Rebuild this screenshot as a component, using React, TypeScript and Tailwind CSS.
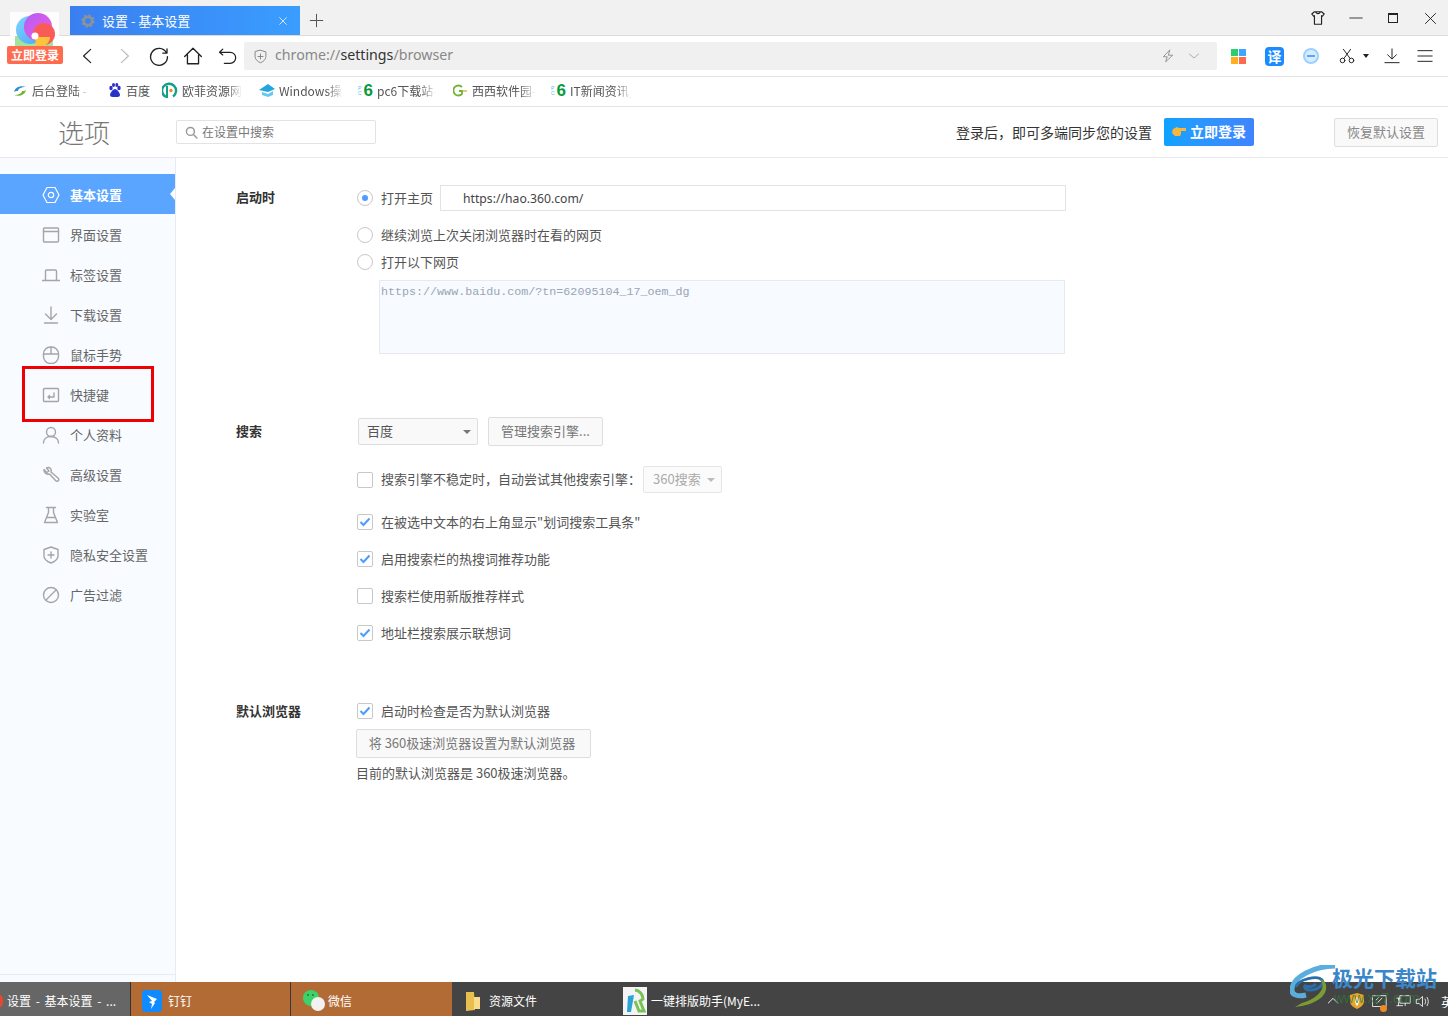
import { ReactNode } from "react";

const cjk = `"Noto Sans CJK SC", "Noto Sans", sans-serif`;

function Svg({ size = 18, children, stroke = "#222", w = 1.4 }: { size?: number; children: ReactNode; stroke?: string; w?: number }) {
  return (
    <svg width={size} height={size} viewBox="0 0 18 18" fill="none" stroke={stroke} strokeWidth={w} strokeLinecap="round" strokeLinejoin="round" className="shrink-0">
      {children}
    </svg>
  );
}

function Logo360() {
  return (
    <svg width="49" height="34" viewBox="0 0 49 34" className="block">
      <defs>
        <linearGradient id="blue" x1="0" y1="0" x2="1" y2="1">
          <stop offset="0" stopColor="#7fd4ff" />
          <stop offset="1" stopColor="#4aa8f5" />
        </linearGradient>
        <linearGradient id="purple" x1="0" y1="0" x2="1" y2="1">
          <stop offset="0" stopColor="#b45cf5" />
          <stop offset="1" stopColor="#f05ce0" />
        </linearGradient>
      </defs>
      <rect width="49" height="34" fill="#fdfdfd" />
      <rect x="5" y="24" width="38" height="10" fill="#a6e39a" />
      <circle cx="20" cy="18" r="14" fill="url(#blue)" />
      <circle cx="28" cy="15" r="14" fill="url(#purple)" />
      <circle cx="34" cy="22" r="11" fill="#fb5b58" />
      <path d="M25 25 L40 25 A 10 10 0 0 1 33 34 L26 34 Z" fill="#fdc33a" />
      <circle cx="25" cy="24" r="3.5" fill="#fff" />
    </svg>
  );
}

function Tab() {
  return (
    <div className="ml-[70px] mt-[6px] flex h-[29px] w-[230px] items-center bg-gradient-to-r from-[#3a7ff0] to-[#3a9dff] pl-[11px] pr-[12px] text-[13px] text-white">
      <svg width="14" height="14" viewBox="0 0 14 14" className="shrink-0">
        <circle cx="7" cy="7" r="4.2" fill="none" stroke="#8a929c" strokeWidth="2.8" />
        <circle cx="7" cy="7" r="5.4" fill="none" stroke="#8a929c" strokeWidth="2.6" strokeDasharray="2.1 2.1" />
      </svg>
      <span className="ml-[7px] flex-1">设置 - 基本设置</span>
      <Svg size={10} stroke="#cfe4ff" w={1.8}>
        <path d="M3 3 15 15M15 3 3 15" />
      </Svg>
    </div>
  );
}

function TitleBar() {
  return (
    <div className="flex h-[36px] items-start border-b border-[#dcdcdc] bg-[#f1f1f1]">
      <Tab />
      <div className="ml-[9px] mt-[13px]">
        <Svg size={15} stroke="#555" w={1.2}>
          <path d="M9 1.500v15M1.500 9h15" />
        </Svg>
      </div>
      <div className="ml-auto mr-[11px] mt-[10px] flex items-center">
        <Svg size={16} stroke="#222" w={1.3}>
          <path d="M5 2h8l3 2.500-2 2.500-1-.6V16H5V6.400L4 7 2 4.500zM6.500 2.500c1 2 4 2 5 0" />
        </Svg>
        <div className="ml-[23px]">
          <Svg size={14} stroke="#222" w={1.1}>
            <path d="M1 9h16" />
          </Svg>
        </div>
        <div className="ml-[25px] h-[10px] w-[10px] border-[1.5px] border-t-[2px] border-[#222]" />
        <div className="ml-[26px]">
          <Svg size={13} stroke="#222" w={1.3}>
            <path d="M2 2 16 16M16 2 2 16" />
          </Svg>
        </div>
      </div>
    </div>
  );
}

function NavBar() {
  return (
    <div className="flex h-[41px] items-center border-b border-[#e4e4e4] bg-white pl-[80px] pr-[15px]">
      <Svg size={16} stroke="#222" w={1.3}>
        <path d="M12 1.500 4 9l8 7.500" />
      </Svg>
      <div className="ml-[20px]">
        <Svg size={16} stroke="#bbb" w={1.3}>
          <path d="M6 1.500 14 9l-8 7.500" />
        </Svg>
      </div>
      <div className="ml-[17px]">
        <Svg size={20} stroke="#222" w={1.2}>
          <path d="M15.600 6A7.600 7.600 0 1 0 16.600 9.500M16.200 2.600v3.800h-3.800" />
        </Svg>
      </div>
      <div className="ml-[14px]">
        <Svg size={20} stroke="#222" w={1.2}>
          <path d="M1.500 9.500 9 2l7.500 7.500M4 8v8h10V8" />
        </Svg>
      </div>
      <div className="ml-[15px]">
        <Svg size={19} stroke="#222" w={1.2}>
          <path d="M4.500 2 1.500 5l3 2.500M2 5h9.500a4.800 4.800 0 0 1 0 10.500H6" />
        </Svg>
      </div>
      <div className="ml-[7px] flex h-[28px] w-[973px] shrink-0 items-center rounded-[2px] bg-[#f0f0f0] pl-[9px] pr-[17px]">
        <Svg size={15} stroke="#888" w={1.2}>
          <path d="M9 1.500 15.500 3.500V9c0 3.500-3 6-6.500 7.500C5.500 15 2.500 12.500 2.500 9V3.500zM9 6v6M6 9h6" />
        </Svg>
        <span className="mb-[1px] ml-[7px] text-[14.2px] leading-none text-[#888]" style={{ fontFamily: `"Noto Sans", sans-serif` }}>
          chrome://<span className="text-[#333]">settings</span>/browser
        </span>
        <div className="ml-auto flex items-center gap-[13px]">
          <Svg size={14} stroke="#888" w={1.1}>
            <path d="M11 1.500 3 10h5l-2 6.500L15 8h-5z" />
          </Svg>
          <Svg size={12} stroke="#999" w={1.2}>
            <path d="M2 6l7 6 7-6" />
          </Svg>
        </div>
      </div>
      <div className="ml-[14px] grid h-[15px] w-[15px] shrink-0 grid-cols-2 gap-px">
        <div className="bg-[#2ecc71]" />
        <div className="bg-[#3ea6ff]" />
        <div className="bg-[#ffb020]" />
        <div className="bg-[#ff6b4a]" />
      </div>
      <div className="ml-[19px] flex h-[19px] w-[19px] items-center justify-center rounded-[4px] bg-[#1a8cff] text-[14px] leading-none font-bold text-white">译</div>
      <div className="ml-[19px] flex h-[16px] w-[16px] items-center justify-center rounded-full border-2 border-[#9cd0ff] bg-[#d8ecff]">
        <div className="h-[2px] w-[8px] bg-[#5aa5ff]" />
      </div>
      <div className="ml-[20px]">
        <Svg size={16} stroke="#222" w={1.1}>
          <circle cx="4" cy="14" r="2.600" />
          <circle cx="14" cy="14" r="2.600" />
          <path d="M5.500 11.800 13 1.500M12.500 11.800 5 1.500" />
        </Svg>
      </div>
      <div className="ml-[8px] h-0 w-0 border-x-[3px] border-t-[4px] border-x-transparent border-t-[#222]" />
      <div className="ml-[15px]">
        <Svg size={16} stroke="#222" w={1.1}>
          <path d="M9 1v11M4 7.500 9 12.500 14 7.500M1 16.500h16" />
        </Svg>
      </div>
      <div className="ml-auto">
        <Svg size={16} stroke="#222" w={1.1}>
          <path d="M1 3h16M1 9h16M1 15h16" />
        </Svg>
      </div>
    </div>
  );
}

function Pc6() {
  return (
    <div className="flex h-[16px] w-[15px] shrink-0 items-center" style={{ fontFamily: `"Liberation Sans", sans-serif` }}>
      <div className="w-[6px] text-[5px] leading-[5px] text-[#55bff0]">
        P
        <br />
        C
      </div>
      <div className="text-[17px] leading-[16px] font-bold text-[#0a9a3c]">6</div>
    </div>
  );
}

const bookmarks: { icon: ReactNode; label: string; w: string; gap: string; fade?: boolean; inner?: string }[] = [
  {
    icon: (
      <svg width="14" height="12" viewBox="0 0 14 12">
        <path d="M1 7C2 2 8 0 13 2 8 2 5 4 5 6 3 6 2 6 1 7z" fill="#2f8fd0" />
        <path d="M13 5c-1 5-7 7-12 5 5 0 8-2 8-4 2 0 3 0 4-1z" fill="#6fb52f" />
      </svg>
    ),
    label: "后台登陆 -",
    w: "w-[58px]",
    gap: "ml-[13px]",
    fade: true,
    inner: "gap-[5px]",
  },
  {
    icon: (
      <svg width="14" height="15" viewBox="0 0 14 15" fill="#2932c8">
        <ellipse cx="3" cy="5" rx="1.700" ry="2.200" />
        <ellipse cx="11" cy="5" rx="1.700" ry="2.200" />
        <ellipse cx="5.500" cy="2" rx="1.500" ry="2" />
        <ellipse cx="8.800" cy="2" rx="1.500" ry="2" />
        <path d="M7 6c2 0 5 4 5 6s-2 2-5 2-5 0-5-2 3-6 5-6z" />
      </svg>
    ),
    label: "百度",
    w: "w-[26px]",
    gap: "ml-[18px]",
  },
  {
    icon: (
      <svg width="16" height="17" viewBox="0 0 16 17" fill="none">
        <path d="M4 15A7 7 0 1 1 11 14.500" stroke="#10a08c" strokeWidth="2.400" />
        <path d="M5 4v12" stroke="#10a08c" strokeWidth="2" />
        <circle cx="9" cy="8.500" r="1.700" fill="#f08a24" />
      </svg>
    ),
    label: "欧菲资源网",
    w: "w-[60px]",
    gap: "ml-[10px]",
    fade: true,
  },
  {
    icon: (
      <svg width="16" height="13" viewBox="0 0 16 13">
        <path d="M0 6 9 0l7 5-7 3z" fill="#23a6e0" />
        <path d="M3 8l6 2 5-3v4l-5 2-6-2z" fill="#6cc7ee" />
      </svg>
    ),
    label: "Windows操",
    w: "w-[64px]",
    gap: "ml-[17px]",
    fade: true,
  },
  { icon: <Pc6 />, label: "pc6下载站-", w: "w-[59px]", gap: "ml-[15px]", fade: true },
  {
    icon: (
      <svg width="15" height="13" viewBox="0 0 15 13" fill="none">
        <path d="M9 3A5 5 0 1 0 9 10V7H6" stroke="#6fb52f" strokeWidth="1.800" />
        <path d="M10 7h4" stroke="#e0a030" strokeWidth="1.200" />
      </svg>
    ),
    label: "西西软件园-",
    w: "w-[64px]",
    gap: "ml-[17px]",
    fade: true,
  },
  { icon: <Pc6 />, label: "IT新闻资讯_", w: "w-[62px]", gap: "ml-[15px]", fade: true },
];

function Bookmarks() {
  return (
    <div className="flex h-[30px] items-center border-b border-[#e4e4e4] bg-white pb-[2px] text-[12px] text-[#555]">
      {bookmarks.map((b) => (
        <div key={b.label} className={`flex items-center ${b.inner ?? "gap-[4px]"} ${b.gap}`}>
          {b.icon}
          <span className={`${b.w} whitespace-nowrap ${b.fade ? "[mask-image:linear-gradient(to_right,black_75%,transparent)]" : ""}`}>{b.label}</span>
        </div>
      ))}
    </div>
  );
}

function Header() {
  return (
    <div className="flex h-[51px] items-center border-b border-[#e9e9e9] bg-white pl-[58px] pr-[10px]">
      <div className="w-[118px] text-[26px] leading-none font-light text-[#777]">选项</div>
      <div className="flex h-[24px] w-[200px] items-center rounded-[2px] border border-[#e3e3e3] pl-[8px] text-[12px] text-[#777]">
        <Svg size={13} stroke="#999" w={2}>
          <circle cx="7.500" cy="7.500" r="5.500" />
          <path d="M12 12l4.500 4.500" />
        </Svg>
        <span className="ml-[4px]">在设置中搜索</span>
      </div>
      <span className="ml-auto text-[14px] text-[#333]">登录后，即可多端同步您的设置</span>
      <div className="ml-[12px] flex h-[28px] w-[90px] items-center justify-center gap-[4px] rounded-[2px] bg-gradient-to-r from-[#0ca2ff] to-[#3f84ff] pb-[2px] text-[14px] font-bold text-white">
        <svg width="14" height="10" viewBox="0 0 14 10">
          <path d="M14 2H7L5 1 1 3 0 7l3 3h5l1-2V5h5z" fill="#f6b73c" />
        </svg>
        立即登录
      </div>
      <div className="ml-[80px] flex h-[29px] w-[104px] items-center justify-center rounded-[2px] border border-[#dedede] bg-[#f9f9f9] text-[13px] text-[#888]">恢复默认设置</div>
    </div>
  );
}

const c = "#a5a5a5";
const menu: { label: string; icon: ReactNode }[] = [
  {
    label: "基本设置",
    icon: (
      <Svg stroke="#fff" w={1.2}>
        <path d="M5 1.500h8L17 9l-4 7.500H5L1 9z" />
        <circle cx="9" cy="9" r="2.700" />
      </Svg>
    ),
  },
  {
    label: "界面设置",
    icon: (
      <Svg stroke={c}>
        <rect x="1.500" y="2" width="15" height="14" rx="1" />
        <path d="M1.500 5.500h15" />
      </Svg>
    ),
  },
  {
    label: "标签设置",
    icon: (
      <Svg stroke={c}>
        <path d="M3.500 14.500V5a1 1 0 0 1 1-1h9a1 1 0 0 1 1 1v9.500M0.500 14.500h17" />
      </Svg>
    ),
  },
  {
    label: "下载设置",
    icon: (
      <Svg stroke={c}>
        <path d="M9 1v12M3.500 8 9 13.500 14.500 8M2.500 17h13" />
      </Svg>
    ),
  },
  {
    label: "鼠标手势",
    icon: (
      <Svg stroke={c}>
        <rect x="1.500" y="1" width="15" height="16.500" rx="7" />
        <path d="M1.500 8h15M9 1v7" />
      </Svg>
    ),
  },
  {
    label: "快捷键",
    icon: (
      <Svg stroke={c}>
        <rect x="1.500" y="2.500" width="15" height="13" rx="1" />
        <path d="M12 7v4H6M7.500 9.500 6 11l1.500 1.500" />
      </Svg>
    ),
  },
  {
    label: "个人资料",
    icon: (
      <Svg stroke={c}>
        <circle cx="9" cy="6" r="4.500" />
        <path d="M1.500 17c0-4 3-6.500 7.500-6.500s7.500 2.500 7.500 6.500" />
      </Svg>
    ),
  },
  {
    label: "高级设置",
    icon: (
      <Svg stroke={c}>
        <path d="M2 3.500 5 6.500 7 5 4.500 2c3-1.500 5.500 1 4.500 4L16.500 12.500c1 1.500-1 3.500-2.500 2.500L7.500 8C5 9 1.500 7 2 3.500z" />
      </Svg>
    ),
  },
  {
    label: "实验室",
    icon: (
      <Svg stroke={c}>
        <path d="M4.500 1.500h9M6.500 1.500v5L2.500 16.500h13l-4-10v-5M4.500 11.500h9" />
      </Svg>
    ),
  },
  {
    label: "隐私安全设置",
    icon: (
      <Svg stroke={c}>
        <path d="M9 1 16 3.500V10c0 3-3 5.500-7 7-4-1.500-7-4-7-7V3.500zM9 6v6M6 9h6" />
      </Svg>
    ),
  },
  {
    label: "广告过滤",
    icon: (
      <Svg stroke={c}>
        <circle cx="9" cy="9" r="7.500" />
        <path d="M4 14 14 4" />
      </Svg>
    ),
  },
];

function SideBar() {
  return (
    <aside className="relative flex w-[176px] shrink-0 flex-col border-r border-[#e8ecf2] bg-[#f8fbff] pt-[16px]">
      {menu.map((m, i) =>
        i === 0 ? (
          <div key={m.label} className="relative flex h-[40px] items-center gap-[10px] bg-[#5aa5ff] pl-[42px] pt-[2px] text-[13px] font-bold text-white">
            {m.icon}
            {m.label}
            <div className="absolute right-0 top-[14px] h-0 w-0 border-y-[6px] border-r-[5px] border-y-transparent border-r-white" />
          </div>
        ) : (
          <div key={m.label} className="flex h-[40px] items-center gap-[10px] pl-[42px] pt-[2px] text-[13px] text-[#666]">
            {m.icon}
            {m.label}
          </div>
        ),
      )}
      <div className="absolute left-[22px] top-[208px] h-[56px] w-[132px] border-[3px] border-[#f00000]" />
      <div className="mb-[7px] mt-auto border-t border-[#e8ecf2]" />
    </aside>
  );
}

function Radio({ on }: { on?: boolean }) {
  return (
    <div className="flex h-[16px] w-[16px] shrink-0 items-center justify-center rounded-full border border-[#c8c8c8] bg-white">
      {on && <div className="h-[6px] w-[6px] rounded-full bg-[#4c9dff]" />}
    </div>
  );
}

function Check({ on }: { on?: boolean }) {
  return (
    <div className="flex h-[16px] w-[16px] shrink-0 items-center justify-center rounded-[2px] border border-[#c8c8c8] bg-white">
      {on && (
        <svg width="12" height="10" viewBox="0 0 12 10" fill="none" stroke="#4c9dff" strokeWidth="2">
          <path d="M1.500 5 4.500 8 10.500 1.500" />
        </svg>
      )}
    </div>
  );
}

function CheckRow({ on, label, mt }: { on?: boolean; label: string; mt: string }) {
  return (
    <div className={`flex h-[26px] items-center gap-[8px] ${mt}`}>
      <Check on={on} />
      <span className="mb-[1px]">{label}</span>
    </div>
  );
}

function Caret({ color }: { color: string }) {
  return <div className="h-0 w-0 border-x-[4px] border-t-[4px] border-x-transparent" style={{ borderTopColor: color }} />;
}

function Settings() {
  return (
    <main className="flex-1 bg-white pl-[60px] pt-[27px] text-[13px] text-[#555]">
      <section className="flex">
        <div className="flex h-[26px] w-[121px] items-center pb-[2px] font-bold text-[#333]">启动时</div>
        <div>
          <div className="flex h-[26px] items-center">
            <Radio on />
            <span className="ml-[8px]">打开主页</span>
            <div className="ml-[7px] flex h-[26px] w-[626px] items-center border border-[#e3e3e3] pl-[22px] pt-[3px] text-[12.2px] text-[#444]" style={{ fontFamily: `"Noto Sans", sans-serif` }}>
              https://hao.360.com/
            </div>
          </div>
          <div className="mt-[11px] flex h-[26px] items-center gap-[8px]">
            <Radio />
            继续浏览上次关闭浏览器时在看的网页
          </div>
          <div className="mt-px flex h-[26px] items-center gap-[8px]">
            <Radio />
            打开以下网页
          </div>
          <div className="ml-[22px] mt-[5px] h-[74px] w-[686px] border border-[#e6e9f0] bg-[#f7faff] pl-px pt-[2.5px] text-[11.7px] leading-[16px] text-[#9aa5b5]" style={{ fontFamily: `"Liberation Mono", monospace` }}>
            https://www.baidu.com/?tn=62095104_17_oem_dg
          </div>
        </div>
      </section>

      <section className="mt-[63px] flex">
        <div className="flex h-[29px] w-[121px] items-center pb-[1px] font-bold text-[#333]">搜索</div>
        <div>
          <div className="flex h-[29px] items-center">
            <div className="ml-px flex h-[27px] w-[120px] items-center justify-between rounded-[2px] border border-[#dedede] bg-[#f9f9f9] pl-[8px] pr-[6px]">
              <span className="mb-[1px]">百度</span>
              <Caret color="#777" />
            </div>
            <div className="ml-[10px] flex h-[29px] w-[115px] items-center justify-center rounded-[2px] border border-[#dedede] bg-[#f9f9f9] pb-[1px] text-[#777]">管理搜索引擎...</div>
          </div>
          <div className="mt-[20px] flex h-[27px] items-center gap-[8px]">
            <Check />
            <span className="mb-[1px]">搜索引擎不稳定时，自动尝试其他搜索引擎：</span>
            <div className="-ml-[6px] flex h-[27px] w-[79px] items-center justify-between rounded-[2px] border border-[#e6e6e6] bg-[#fbfbfb] pl-[9px] pr-[6px] text-[#aaa]">
              <span className="mb-[1px]">360搜索</span>
              <Caret color="#bbb" />
            </div>
          </div>
          <CheckRow on label={'在被选中文本的右上角显示"划词搜索工具条"'} mt="mt-[16px]" />
          <CheckRow on label="启用搜索栏的热搜词推荐功能" mt="mt-[11px]" />
          <CheckRow label="搜索栏使用新版推荐样式" mt="mt-[11px]" />
          <CheckRow on label="地址栏搜索展示联想词" mt="mt-[11px]" />
        </div>
      </section>

      <section className="mt-[52px] flex">
        <div className="flex h-[26px] w-[121px] items-center pb-[1px] font-bold text-[#333]">默认浏览器</div>
        <div>
          <CheckRow on label="启动时检查是否为默认浏览器" mt="mt-0" />
          <div className="-ml-px mt-[5px] flex h-[29px] w-[235px] items-center justify-center rounded-[2px] border border-[#dedede] bg-[#f9f9f9] pb-[1px] pr-[3px] text-[#777]">将 360极速浏览器设置为默认浏览器</div>
          <div className="-ml-px mt-[5px] h-[20px] leading-[20px]">目前的默认浏览器是 360极速浏览器。</div>
        </div>
      </section>
    </main>
  );
}

function TaskItem({ icon, label, cls }: { icon: ReactNode; label: string; cls: string }) {
  return (
    <div className={`flex h-full shrink-0 items-center pt-[4px] text-[12px] text-white ${cls}`}>
      {icon}
      <span className="whitespace-nowrap">{label}</span>
    </div>
  );
}

function TaskBar() {
  return (
    <div className="flex h-[34px] shrink-0 items-center overflow-hidden bg-[#444444]">
      <TaskItem
        cls="relative w-[131px] border-r border-[#333] bg-[#666666] pl-[7px] [word-spacing:2px]"
        icon={<div className="absolute -left-[8px] top-[12px] h-[14px] w-[11px] rounded-full bg-[#e2492f]" />}
        label="设置 - 基本设置 - ..."
      />
      <TaskItem
        cls="w-[160px] border-r border-[#3a3a3a] bg-[#b36b35] pl-[11px]"
        icon={
          <svg width="20" height="22" viewBox="0 0 20 22" className="mr-[6px]">
            <rect width="20" height="22" rx="4" fill="#0f8bff" />
            <path d="M5 5l10 4-3 3 1 1-4 6 1-5-3-2 3-1z" fill="#fff" />
          </svg>
        }
        label="钉钉"
      />
      <TaskItem
        cls="w-[161px] bg-[#b36b35] pl-[11px]"
        icon={
          <svg width="24" height="22" viewBox="0 0 24 22" className="mr-[2px]">
            <ellipse cx="9" cy="8" rx="8" ry="8" fill="#3ed16a" />
            <circle cx="16" cy="14" r="7" fill="#f2f2f2" />
            <circle cx="6" cy="5" r="1" fill="#1c7a3a" />
            <circle cx="11" cy="5" r="1" fill="#1c7a3a" />
          </svg>
        }
        label="微信"
      />
      <TaskItem
        cls="w-[171px] pl-[13px]"
        icon={
          <svg width="16" height="20" viewBox="0 0 16 20" className="mr-[8px]">
            <path d="M1 1h8l1 18-9 1z" fill="#e8bf4f" />
            <path d="M9 6h6v12H9z" fill="#f8dc8a" />
          </svg>
        }
        label="资源文件"
      />
      <TaskItem
        cls="w-[160px]"
        icon={
          <svg width="24" height="28" viewBox="0 0 24 28" className="mr-[4px]">
            <rect width="24" height="28" fill="#f4f4f4" />
            <path d="M12 3a9 9 0 0 1 8 9l-3 2 4 10h-5l-4-10" fill="none" stroke="#79c255" strokeWidth="3" />
            <path d="M5 9l6-1-3 17H4z" fill="#2aa3d8" />
          </svg>
        }
        label="一键排版助手(MyE..."
      />
      <div className="ml-auto flex items-center pt-[4px] text-white">
        <Svg size={12} stroke="#eee" w={1.5}>
          <path d="M2 12 9 5l7 7" />
        </Svg>
        <svg width="14" height="16" viewBox="0 0 14 16" className="ml-[11px]">
          <path d="M7 0l7 2v6c0 4-3 6-7 8-4-2-7-4-7-8V2z" fill="#e8a52a" />
          <path d="M7 4c3 3 2 7 0 9-2-2-3-6 0-9z" fill="#f4f4f4" />
        </svg>
        <div className="relative ml-[8px]">
          <Svg size={15} stroke="#eee" w={1.1}>
            <rect x="1" y="2" width="16" height="13" />
            <path d="M6 11l6-6M5 7l3-3" />
          </Svg>
          <div className="absolute -bottom-[3px] right-0 h-[7px] w-[7px] rounded-full bg-[#f08a24]" />
        </div>
        <div className="ml-[9px]">
          <Svg size={15} stroke="#eee" w={1.1}>
            <rect x="5" y="2" width="12" height="9" />
            <path d="M1 5h4M3 5v9M1 14h7M11 11v3" />
          </Svg>
        </div>
        <div className="ml-[4px]">
          <Svg size={15} stroke="#eee" w={1.1}>
            <path d="M2 6.500h3L9 3v12l-4-3.500H2zM12 6c1 2 1 4 0 6M14.500 4c2 3 2 7 0 10" />
          </Svg>
        </div>
        <span className="ml-[11px] w-[7px] overflow-hidden text-[13px] leading-none">英</span>
      </div>
    </div>
  );
}

function Watermark() {
  return (
    <div className="pointer-events-none absolute left-[1290px] top-[965px] flex items-start">
      <svg width="46" height="44" viewBox="0 0 46 44" fill="none">
        <path d="M45 1C24 1 3 12 2 24c-1 6 6 8 14 6" stroke="#5aaede" strokeWidth="5" />
        <path d="M6 22C8 14 28 10 32 15c3 4-4 10-12 10-4 0-6-2-5-4 3 1 8 1 11-2" stroke="#2b6fa8" strokeWidth="3" />
        <path d="M5 42C24 40 38 32 36 20c-1-4-3-5-6-6 8 10-4 20-18 24z" fill="#7a9c35" />
      </svg>
      <div className="-ml-[4px]">
        <div className="text-[21px] leading-[24px] font-bold whitespace-nowrap text-[#3a86c8]">极光下载站</div>
        <div className="mt-[1px] pl-[2px] text-[14px] leading-[16px] whitespace-nowrap text-[#2f7d3a] opacity-70" style={{ fontFamily: `"Liberation Sans", sans-serif` }}>www.xz7.com</div>
      </div>
    </div>
  );
}

export default function App() {
  return (
    <div className="relative flex h-[1016px] w-[1448px] flex-col overflow-hidden bg-white" style={{ fontFamily: cjk }}>
      <TitleBar />
      <NavBar />
      <Bookmarks />
      <Header />
      <div className="flex min-h-0 flex-1">
        <SideBar />
        <Settings />
      </div>
      <TaskBar />
      <div className="absolute left-[10px] top-[12px]">
        <Logo360 />
      </div>
      <div className="absolute left-[7px] top-[46px] flex h-[18px] w-[56px] items-center justify-center rounded-[2px] bg-[#ff6b4f] text-[12px] leading-none font-bold text-white">立即登录</div>
      <Watermark />
    </div>
  );
}
